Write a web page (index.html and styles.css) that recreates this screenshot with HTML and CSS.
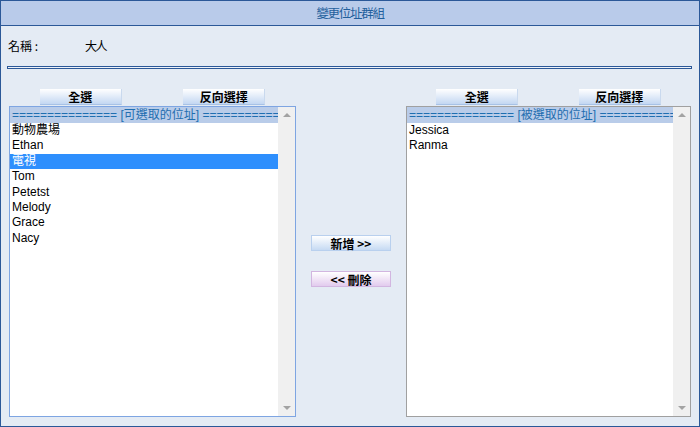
FILE: index.html
```html
<!DOCTYPE html>
<html lang="zh-Hant">
<head>
<meta charset="utf-8">
<title>變更位址群組</title>
<link rel="stylesheet" href="styles.css">
</head>
<body>
<div class="frame">
  <div class="title">變更位址群組</div>
  <div class="name-row"><span class="label">名稱 :</span><span class="value">大人</span></div>
  <div class="sep"></div>
  <div class="panes">
    <div class="col col-left">
      <div class="btn-row">
        <button class="btn">全選</button>
        <button class="btn">反向選擇</button>
      </div>
      <div class="listbox focused">
        <div class="list-body">
          <div class="list-head">=============== [可選取的位址] ===============</div>
          <div class="item">動物農場</div>
          <div class="item">Ethan</div>
          <div class="item selected">電視</div>
          <div class="item">Tom</div>
          <div class="item">Petetst</div>
          <div class="item">Melody</div>
          <div class="item">Grace</div>
          <div class="item">Nacy</div>
        </div>
        <div class="scroll"><span class="arrow up"></span><span class="arrow down"></span></div>
      </div>
    </div>
    <div class="mid">
      <button class="btn btn-add">新增 &gt;&gt;</button>
      <button class="btn btn-del">&lt;&lt; 刪除</button>
    </div>
    <div class="col col-right">
      <div class="btn-row">
        <button class="btn">全選</button>
        <button class="btn">反向選擇</button>
      </div>
      <div class="listbox">
        <div class="list-body">
          <div class="list-head">=============== [被選取的位址] ===============</div>
          <div class="item">Jessica</div>
          <div class="item">Ranma</div>
        </div>
        <div class="scroll"><span class="arrow up"></span><span class="arrow down"></span></div>
      </div>
    </div>
  </div>
</div>
</body>
</html>
```
FILE: styles.css
```css
html, body {
  margin: 0;
  padding: 0;
  background: #e4ebf4;
}
body {
  font-family: "Liberation Sans", "Noto Sans CJK TC", Arial, sans-serif;
  font-size: 12px;
  color: #000;
}
.frame {
  width: 700px;
  height: 427px;
  box-sizing: border-box;
  border: 1px solid #2b5898;
  background: #e4ebf4;
  display: flex;
  flex-direction: column;
}
.title {
  height: 24px;
  line-height: 24px;
  background: #b9cbea;
  border-bottom: 1px solid #2b5898;
  text-align: center;
  color: #1f5f9c;
  font-size: 12.5px;
  letter-spacing: -1.3px;
  font-family: "Noto Sans CJK TC", sans-serif;
}
.name-row {
  padding: 12px 0 0 7px;
  height: 16px;
  line-height: 16px;
  display: flex;
}
.label {
  width: 77px;
  font-family: "Noto Sans CJK TC", sans-serif;
  font-size: 12px;
}
.value {
  font-family: "Noto Sans CJK TC", sans-serif;
  font-size: 12px;
  letter-spacing: -1.5px;
}
.sep {
  margin: 12px 7px 0 6px;
  height: 1px;
  border: 1px solid #2b5898;
  background: #eef2f8;
}
.panes {
  margin-top: 20px;
  padding-left: 8px;
  display: flex;
}
.col-left { width: 287px; }
.col-right { width: 285px; }
.mid {
  width: 110px;
  padding-top: 146px;
  display: flex;
  flex-direction: column;
  align-items: center;
  gap: 20px;
}
.btn-row {
  height: 17px;
  display: grid;
  grid-template-columns: 1fr 1fr;
  justify-items: center;
}
.btn {
  width: 82px;
  height: 16px;
  margin: 0;
  padding: 0;
  border: none;
  border-bottom: 1px solid #a7c2e6;
  border-right: 1px solid #c9d9ee;
  background: linear-gradient(#ffffff, #c3d7f2);
  font-family: "Noto Sans CJK TC", sans-serif;
  font-weight: bold;
  font-size: 12px;
  line-height: 15px;
  color: #000;
  text-align: center;
}
.mid .btn { width: 80px; }
.btn-add {
  border: 1px solid #b9d0ee;
  background: linear-gradient(#ffffff, #c6daf3);
}
.btn-del {
  border: 1px solid #d2b6e0;
  background: linear-gradient(#ffffff, #e2cbee);
}
.listbox {
  height: 311px;
  box-sizing: border-box;
  border: 1px solid #a0a0a0;
  background: #fff;
  display: flex;
  overflow: hidden;
}
.listbox.focused {
  border-color: #7ea5e2;
}
.list-body {
  flex: 1;
  min-width: 0;
  overflow: hidden;
}
.list-head {
  height: 16px;
  line-height: 16px;
  background: #b9cce9;
  color: #1f6eb0;
  white-space: nowrap;
  overflow: hidden;
  padding-left: 2px;
  font-family: "Liberation Sans", "Noto Sans CJK TC", sans-serif;
}
.item {
  height: 15.4px;
  line-height: 15.4px;
  padding-left: 2px;
  white-space: nowrap;
  font-family: "Liberation Sans", "Noto Sans CJK TC", sans-serif;
}
.item.selected {
  background: #2e8ffd;
  color: #fff;
}
.scroll {
  width: 17px;
  background: #f0f0f0;
  position: relative;
}
.arrow {
  position: absolute;
  left: 5px;
  width: 0;
  height: 0;
  border-left: 4px solid transparent;
  border-right: 4px solid transparent;
}
.arrow.up {
  top: 6px;
  border-bottom: 4px solid #a3a3a3;
}
.arrow.down {
  bottom: 6px;
  border-top: 4px solid #a3a3a3;
}
```
